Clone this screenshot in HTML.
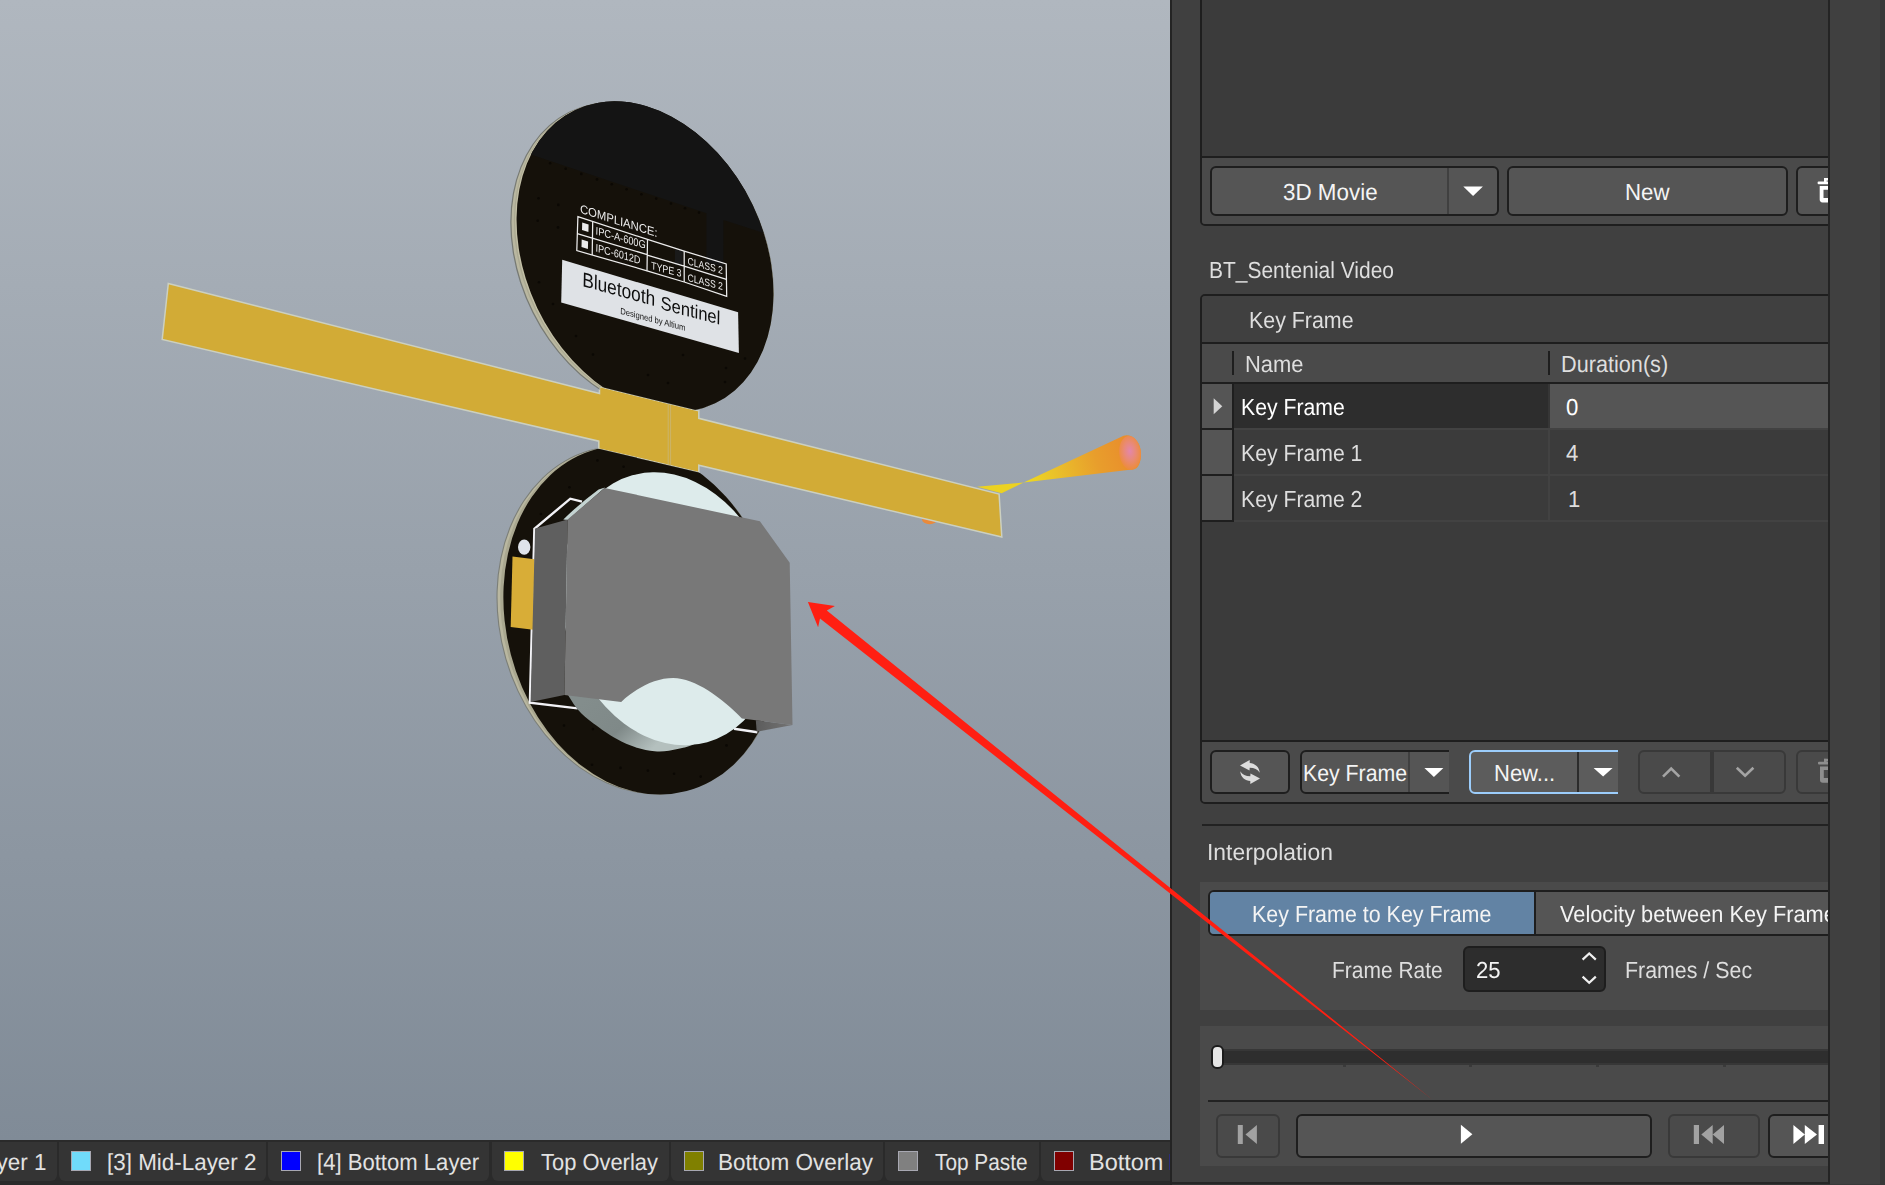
<!DOCTYPE html>
<html lang="en">
<head>
<meta charset="utf-8">
<title>3D Movie Editor</title>
<style>
html,body{margin:0;padding:0}
body{width:1885px;height:1185px;overflow:hidden;position:relative;background:#404040;font-family:"Liberation Sans",sans-serif}
div,span,svg{box-sizing:border-box}
.a{position:absolute}
.t{position:absolute;white-space:pre;font:23.3px/26px "Liberation Sans",sans-serif;text-rendering:geometricPrecision;transform-origin:0 0}
.btn{position:absolute;background:#555555;border:2px solid #1e1e1e;border-radius:6px}
.dis{background:#4a4a4a;border-color:#393939}
.ln{position:absolute;background:#1e1e1e}
</style>
</head>
<body>
<!-- ===== 3D viewport ===== -->
<div class="a" style="left:0;top:0;width:1170px;height:1140px;background:linear-gradient(180deg,#b0b7bf 0%,#808b97 100%)"></div>
<svg class="a" style="left:0;top:0;will-change:transform" width="1170" height="1140" viewBox="0 0 1170 1140" font-family="'Liberation Sans',sans-serif">
 <defs>
  <linearGradient id="gcone" gradientUnits="userSpaceOnUse" x1="1023" y1="483" x2="1128" y2="452">
   <stop offset="0" stop-color="#eedb1e"/><stop offset="0.3" stop-color="#eac22a"/><stop offset="0.7" stop-color="#e89e2c"/><stop offset="1" stop-color="#e98e2c"/>
  </linearGradient>
  <radialGradient id="gcap" cx="0.5" cy="0.45" r="0.6">
   <stop offset="0" stop-color="#e386ac"/><stop offset="0.45" stop-color="#e98a76"/><stop offset="1" stop-color="#ee8c2e"/>
  </radialGradient>
  <linearGradient id="gbat" gradientUnits="userSpaceOnUse" x1="585" y1="700" x2="640" y2="760">
   <stop offset="0" stop-color="#838d8c"/><stop offset="0.55" stop-color="#7f8988"/><stop offset="1" stop-color="#b4c0be"/>
  </linearGradient>
  <linearGradient id="gfacet" gradientUnits="userSpaceOnUse" x1="756" y1="726" x2="792" y2="726">
   <stop offset="0" stop-color="#5c5c5c"/><stop offset="1" stop-color="#747474"/>
  </linearGradient>
  <clipPath id="cliptop"><path d="M0 0H1170V525.6L599.5 386.5V393.6L0 240.4Z"/></clipPath>
  <clipPath id="clipbot"><path d="M0 308.2L1170 583.1V1140H0Z"/></clipPath>
  <clipPath id="cliptopface"><ellipse cx="645.04" cy="256.7" rx="162.45" ry="119.35" transform="rotate(-115.56 645.04 256.7)"/></clipPath>
 </defs>

 <!-- light cone + marker -->
 <path d="M1023.7 482.4L1123.6 435.8C1131 433 1140.6 441 1141 452.8C1141.3 463 1137.5 470.4 1131.9 469.4Z" fill="url(#gcone)"/>
 <path d="M1023.7 482.4L977 486.8L1001.6 493.2Z" fill="#ecd222"/>
 <ellipse cx="1130" cy="452.9" rx="10.8" ry="17" transform="rotate(-6 1130 452.9)" fill="url(#gcap)"/>
 <ellipse cx="929.6" cy="519.6" rx="7.6" ry="4.6" fill="#ea8a3a"/>

 <!-- flex strip -->
 <path d="M168.3 283.4L599.5 393.5V386.5L698.8 410.7V418.3L999.1 494L1001.8 537L698.8 465.3V472.4L598.8 448.9V441.2L162.2 339.5Z" fill="#d2ab36" stroke="#ccd0c0" stroke-width="1.5" stroke-linejoin="miter"/>
 <path d="M668.2 404V466M670.6 404.5V466.5" stroke="#c9b981" stroke-width="0.7" fill="none"/>

 <!-- top board -->
 <g clip-path="url(#cliptop)">
  <ellipse cx="642" cy="257.5" rx="162.9" ry="122.7" transform="rotate(-116.6 642 257.5)" fill="#777a74"/>
  <ellipse cx="642.3" cy="257.5" rx="162.1" ry="121.7" transform="rotate(-116.6 642.3 257.5)" fill="#b9b7a0"/>
  <ellipse cx="643.6" cy="257.1" rx="162.3" ry="120.6" transform="rotate(-116.1 643.6 257.1)" fill="#aba992"/>
  <ellipse cx="644.3" cy="256.9" rx="162.4" ry="120" transform="rotate(-115.8 644.3 256.9)" fill="#c2bfa6"/>
  <ellipse cx="645.04" cy="256.7" rx="162.45" ry="119.35" transform="rotate(-115.56 645.04 256.7)" fill="#15110a"/>
  <g clip-path="url(#cliptopface)">
   <path d="M480 137.5L706.5 213.3V262L723.4 267V220L800 244.5V60H480Z" fill="#141414"/>
   <path d="M675 249.5h7.6v15h-7.6z" fill="#1a1a1a"/>
  </g>
 </g>
 <g fill="#0b0804"><circle cx="550.1" cy="163.2" r="1.3"/><circle cx="565.7" cy="168.7" r="1.3"/><circle cx="581.3" cy="173.9" r="1.3"/><circle cx="597" cy="179.4" r="1.3"/><circle cx="611.8" cy="184.3" r="1.3"/><circle cx="626.6" cy="189.2" r="1.3"/><circle cx="641.4" cy="194.2" r="1.3"/><circle cx="656.2" cy="198.6" r="1.3"/><circle cx="671" cy="203.5" r="1.3"/><circle cx="685" cy="208.2" r="1.3"/><circle cx="699" cy="212.6" r="1.3"/><circle cx="538.5" cy="198.3" r="1.3"/><circle cx="558.3" cy="204.9" r="1.3"/><circle cx="537.7" cy="220.8" r="1.3"/><circle cx="558" cy="227.4" r="1.3"/><circle cx="539" cy="282.3" r="1.3"/><circle cx="553" cy="304" r="1.3"/><circle cx="576" cy="336" r="1.3"/><circle cx="593" cy="354.5" r="1.3"/><circle cx="648" cy="375" r="1.3"/><circle cx="668" cy="383" r="1.3"/><circle cx="683" cy="355" r="1.3"/><circle cx="726" cy="368" r="1.3"/><circle cx="745" cy="358.5" r="1.3"/><circle cx="725" cy="382" r="1.3"/></g>
 <!-- silkscreen on top board -->
 <g fill="#ebebeb">
  <text transform="matrix(1 0.315 -0.03 1 580 212.8)" font-size="12.2" textLength="77.4" lengthAdjust="spacingAndGlyphs">COMPLIANCE:</text>
  <text transform="matrix(1 0.289 -0.03 1 595.6 234.3)" font-size="11" textLength="50" lengthAdjust="spacingAndGlyphs">IPC-A-600G</text>
  <text transform="matrix(1 0.288 -0.03 1 595.6 251.2)" font-size="11" textLength="44.6" lengthAdjust="spacingAndGlyphs">IPC-6012D</text>
  <text transform="matrix(1 0.262 -0.02 1 651 269)" font-size="10.6" textLength="30.4" lengthAdjust="spacingAndGlyphs">TYPE 3</text>
  <text transform="matrix(1 0.266 -0.02 1 687.6 264.6)" font-size="10.4" textLength="35.2" lengthAdjust="spacingAndGlyphs">CLASS 2</text>
  <text transform="matrix(1 0.262 -0.02 1 687.6 280.9)" font-size="10.4" textLength="35.2" lengthAdjust="spacingAndGlyphs">CLASS 2</text>
  <path d="M582.2 222.6l6.4 2-.2 7.4-6.4-2zM581.7 239.6l6.4 2-.2 7.4-6.4-2z"/>
 </g>
 <g fill="none" stroke="#ececec" stroke-width="1.25" stroke-linejoin="miter">
  <path d="M577.9 216.6L647.5 239.4L684.2 251.1L726.2 263.9L726.7 296.3L684.2 282L647 270.8L576.8 250.6Z"/>
  <path d="M592.7 221.6L592.2 255M647.5 239.4L647 270.8M684.2 251.1V282M577.3 233.6L647.2 254.6M647.2 255.2L684.2 266.2L726.4 279.4"/>
 </g>
 <path d="M562.2 259.8L738.1 312.2L738.9 352.9L561.2 302.6Z" fill="#dfe2e6"/>
 <text transform="matrix(1 0.278 -0.02 1 582.2 285.9)" font-size="20.3" fill="#0d0d0d" textLength="72.8" lengthAdjust="spacingAndGlyphs">Bluetooth</text>
 <text transform="matrix(1 0.262 -0.02 1 660.6 309.1)" font-size="18.9" fill="#0d0d0d" textLength="59.6" lengthAdjust="spacingAndGlyphs">Sentinel</text>
 <text transform="matrix(1 0.262 -0.02 1 620.3 313.8)" font-size="8.9" fill="#161616" textLength="65" lengthAdjust="spacingAndGlyphs">Designed by Altium</text>

 <!-- bottom board -->
 <g clip-path="url(#clipbot)">
  <ellipse cx="639.1" cy="620.1" rx="177.1" ry="139.3" transform="rotate(-106.3 639.1 620.1)" fill="#7c7f78"/>
  <ellipse cx="639.3" cy="620.1" rx="176.2" ry="138.4" transform="rotate(-106.3 639.3 620.1)" fill="#b9b7a0"/>
  <ellipse cx="640.4" cy="620.1" rx="176.6" ry="137" transform="rotate(-105.5 640.4 620.1)" fill="#a9a790"/>
  <ellipse cx="641.8" cy="620.1" rx="176.8" ry="135.4" transform="rotate(-104.7 641.8 620.1)" fill="#15110a"/>
 </g>
 <g fill="#0b0804"><circle cx="564" cy="725.5" r="1.3"/><circle cx="592.9" cy="729.1" r="1.3"/><circle cx="592" cy="764.7" r="1.3"/><circle cx="620.5" cy="767.9" r="1.3"/><circle cx="647.9" cy="770.6" r="1.3"/><circle cx="674.1" cy="773.7" r="1.3"/><circle cx="700.7" cy="776.6" r="1.3"/><circle cx="726.5" cy="745.4" r="1.3"/><circle cx="597.4" cy="460.4" r="1.3"/><circle cx="623.6" cy="466.7" r="1.3"/><circle cx="649.7" cy="472.5" r="1.3"/><circle cx="569.4" cy="487.3" r="1.3"/><circle cx="540.9" cy="514" r="1.3"/></g>
 <path d="M582 501.6L570.3 498.7L534.4 528.8L529.9 702.6L577.6 708.4M734 728.7L757.4 732.3" fill="none" stroke="#f2f2f6" stroke-width="2.4" stroke-linejoin="miter"/>
 <path d="M512.5 556.5L534.4 559.3L533.2 629.7L510.7 626.9Z" fill="#d8ad37"/>
 <ellipse cx="524.2" cy="547.1" rx="6.2" ry="7.6" fill="#dfe3ea"/>
 <!-- battery (side then face) -->
 <path d="M568.2 695.3C569.9 697.8 574.0 705.4 578.2 710.1C582.4 714.8 587.1 718.7 593.5 723.5C599.9 728.3 609.4 734.8 616.4 738.8C623.4 742.8 629.1 745.2 635.5 747.3C641.9 749.4 649.0 750.6 654.6 751.2C660.2 751.8 664.1 751.3 668.9 750.7C673.7 750.1 679.0 748.8 683.2 747.8C687.4 746.8 692.2 745.0 694.0 744.5L640 715L621.2 701L564.4 694Z" fill="url(#gbat)"/>
 <ellipse cx="669.7" cy="608.8" rx="138.6" ry="106.2" transform="rotate(-105.7 669.7 608.8)" fill="#ddebeb"/>
 <path d="M568 520L563.3 519.6Q580 503 598.6 489.4L605 487.6Z" fill="#c4d4d2"/>
 <!-- battery holder body -->
 <path d="M535.1 528.5L567.6 519.5L564.4 695L530.6 702Z" fill="#5f5f5f"/>
 <path d="M755.8 720.3L792.5 725L756.7 731.7Z" fill="url(#gfacet)"/>
 <path d="M604.6 487.9L759.9 521.3L789.7 562.8L792.5 725L755.8 720.3L741.9 718.4C722 698 695 678 673.2 678C655 678 636 688 621.2 702L564.4 695L567.6 519.5Z" fill="#787878"/>
</svg>
<!-- ===== layer tabs ===== -->
<div class="a" id="tabs" style="left:0;top:1140px;width:1170px;height:45px;background:#2a2a2a;overflow:hidden">
 <div class="a" style="left:-59.0px;top:1.5px;width:115.6px;height:39.5px;background:#343434;border-radius:0 0 6px 6px"></div>
 <div class="a" style="left:58.6px;top:1.5px;width:207.8px;height:39.5px;background:#343434;border-radius:0 0 6px 6px"></div>
 <div class="a" style="left:268.4px;top:1.5px;width:221.1px;height:39.5px;background:#343434;border-radius:0 0 6px 6px"></div>
 <div class="a" style="left:491.5px;top:1.5px;width:177.3px;height:39.5px;background:#343434;border-radius:0 0 6px 6px"></div>
 <div class="a" style="left:670.8px;top:1.5px;width:212.2px;height:39.5px;background:#343434;border-radius:0 0 6px 6px"></div>
 <div class="a" style="left:885.0px;top:1.5px;width:154.4px;height:39.5px;background:#343434;border-radius:0 0 6px 6px"></div>
 <div class="a" style="left:1041.4px;top:1.5px;width:187.6px;height:39.5px;background:#343434;border-radius:0 0 6px 6px"></div>
 <div class="a" style="left:71.0px;top:11px;width:20px;height:20px;background:#70dbfa;border:1px solid #a8a8b2"></div>
 <div class="a" style="left:281.0px;top:11px;width:20px;height:20px;background:#0000ff;border:1px solid #a8a8b2"></div>
 <div class="a" style="left:504.0px;top:11px;width:20px;height:20px;background:#ffff00;border:1px solid #a8a8b2"></div>
 <div class="a" style="left:683.7px;top:11px;width:20px;height:20px;background:#808000;border:1px solid #a8a8b2"></div>
 <div class="a" style="left:897.8px;top:11px;width:20px;height:20px;background:#808080;border:1px solid #a8a8b2"></div>
 <div class="a" style="left:1053.7px;top:11px;width:20px;height:20px;background:#800000;border:1px solid #a8a8b2"></div>
 <div class="a" style="left:1168.8px;top:14px;width:1.2px;height:16px;background:#2c2c78"></div>
</div>
<span id="t21" class="t" style="left:-102.84px;top:1149px;transform:scaleX(0.9616);color:#e2e2e2">[2] Mid-Layer 1</span><span id="t22" class="t" style="left:106.96px;top:1149px;transform:scaleX(0.9618);color:#e2e2e2">[3] Mid-Layer 2</span><span id="t23" class="t" style="left:317.38px;top:1149px;transform:scaleX(0.9483);color:#e2e2e2">[4] Bottom Layer</span><span id="t24" class="t" style="left:541.05px;top:1149px;transform:scaleX(0.9403);color:#e2e2e2">Top Overlay</span><span id="t25" class="t" style="left:718.27px;top:1149px;transform:scaleX(0.9655);color:#e2e2e2">Bottom Overlay</span><span id="t26" class="t" style="left:934.77px;top:1149px;transform:scaleX(0.8937);color:#e2e2e2">Top Paste</span>
<div class="a" style="left:0;top:1140px;width:1170px;height:45px;overflow:hidden"><div class="a" style="left:0;top:-1140px"><span id="t27" class="t" style="left:1088.69px;top:1149px;transform:scaleX(1.0080);color:#e2e2e2">Bottom Solder</span></div></div>
<!-- ===== right side panel frame ===== -->
<div class="a" style="left:1170px;top:0;width:2px;height:1185px;background:#242424"></div>
<div class="a" style="left:1172px;top:1182px;width:658px;height:2px;background:#262626"></div>
<div class="a" style="left:1172px;top:1184px;width:658px;height:1px;background:#333333"></div>
<div class="a" style="left:1830px;top:1183.5px;width:55px;height:1.5px;background:#393939"></div>
<div class="a" style="left:1828px;top:0;width:2px;height:1184px;background:#242424"></div>
<div class="a" style="left:1880px;top:0;width:5px;height:1185px;background:#383838"></div>

<!-- ===== clipped panel content (page coordinates) ===== -->
<div class="a" id="pc" style="left:0;top:0;width:1828px;height:1182px;overflow:hidden">

 <!-- movie list box -->
 <div class="a" style="left:1200px;top:-6px;width:700px;height:232px;background:#3b3b3b;border:2px solid #1e1e1e;border-radius:5px"></div>
 <div class="a" style="left:1202px;top:158px;width:640px;height:66px;background:#4a4a4a;border-radius:0 0 0 3px"></div>
 <div class="ln" style="left:1202px;top:156px;width:640px;height:2px"></div>
 <!-- 3D Movie split button -->
 <div class="btn" style="left:1210px;top:166px;width:289px;height:50px"></div>
 <div class="a" style="left:1447px;top:168px;width:2px;height:46px;background:#404040"></div>
 <svg class="a" style="left:1460px;top:183px" width="28" height="16" viewBox="1460 183 28 16"><path d="M1463.3 186.6h19.6l-9.8 9.4z" fill="#ffffff"/></svg>
 <span id="t1" class="t" style="left:1282.75px;top:179px;transform:scaleX(0.9612);color:#f4f4f4">3D Movie</span>
 <!-- New button -->
 <div class="btn" style="left:1507px;top:166px;width:281px;height:50px"></div>
 <span id="t2" class="t" style="left:1625.48px;top:179px;transform:scaleX(0.9558);color:#f4f4f4">New</span>
 <!-- delete button (clipped) -->
 <div class="btn" style="left:1796px;top:166px;width:60px;height:50px"></div>
 <svg class="a" style="left:1814px;top:175px" width="30" height="30" viewBox="1814 175 30 30"><g fill="#ffffff"><rect x="1824" y="178" width="8" height="2.6"/><rect x="1824" y="178" width="2.6" height="5"/><rect x="1817.6" y="181.6" width="20" height="2.7" rx="1"/><path d="M1819.7 186h17v13.6a2.8 2.8 0 0 1-2.8 2.8h-11.4a2.8 2.8 0 0 1-2.8-2.8zM1823.5 189.7v8.4h7v-8.4z" fill-rule="evenodd"/></g></svg>

 <span id="t3" class="t" style="left:1209.28px;top:257px;transform:scaleX(0.9003);color:#dedede">BT_Sentenial Video</span>

 <!-- key frame box -->
 <div class="a" style="left:1200px;top:294px;width:700px;height:510px;background:#3b3b3b;border:2px solid #1e1e1e;border-radius:5px"></div>
 <div class="a" style="left:1202px;top:296px;width:640px;height:46px;background:#404040;border-radius:3px 0 0 0"></div>
 <span id="t4" class="t" style="left:1248.85px;top:307px;transform:scaleX(0.9177);color:#dedede">Key Frame</span>
 <div class="ln" style="left:1202px;top:342px;width:640px;height:2px"></div>
 <div class="a" style="left:1202px;top:344px;width:640px;height:38px;background:#4a4a4a"></div>
 <div class="ln" style="left:1232px;top:351px;width:2px;height:24px"></div>
 <div class="ln" style="left:1548px;top:351px;width:2px;height:24px"></div>
 <span id="t5" class="t" style="left:1245.31px;top:351px;transform:scaleX(0.9423);color:#dedede">Name</span><span id="t6" class="t" style="left:1561.23px;top:351px;transform:scaleX(0.9298);color:#dedede">Duration(s)</span>
 <div class="ln" style="left:1202px;top:382px;width:640px;height:2px"></div>
 <!-- rows -->
 <div class="a" style="left:1202px;top:384px;width:30px;height:138px;background:#555555"></div>
 <div class="ln" style="left:1232px;top:384px;width:2px;height:138px"></div>
 <div class="ln" style="left:1202px;top:428px;width:32px;height:2px"></div>
 <div class="ln" style="left:1202px;top:474px;width:32px;height:2px"></div>
 <div class="ln" style="left:1202px;top:520px;width:32px;height:2px"></div>
 <div class="a" style="left:1234px;top:384px;width:314px;height:44px;background:#2d2d2d"></div>
 <div class="a" style="left:1548px;top:384px;width:2px;height:44px;background:#363636"></div>
 <div class="a" style="left:1550px;top:384px;width:300px;height:44px;background:#555555"></div>
 <div class="a" style="left:1234px;top:428px;width:620px;height:2px;background:#424242"></div>
 <div class="a" style="left:1234px;top:474px;width:620px;height:2px;background:#424242"></div>
 <div class="a" style="left:1234px;top:520px;width:620px;height:2px;background:#424242"></div>
 <div class="a" style="left:1548px;top:430px;width:2px;height:90px;background:#424242"></div>
 <svg class="a" style="left:1210px;top:396px" width="16" height="20" viewBox="1210 396 16 20"><path d="M1213.7 398.3l8.6 8-8.6 8z" fill="#d4d4d4"/></svg>
 <span id="t7" class="t" style="left:1241.46px;top:394px;transform:scaleX(0.9105);color:#ffffff">Key Frame</span><span id="t8" class="t" style="left:1241.46px;top:440px;transform:scaleX(0.9105);color:#dedede">Key Frame 1</span><span id="t9" class="t" style="left:1241.46px;top:486px;transform:scaleX(0.9105);color:#dedede">Key Frame 2</span><span id="t10" class="t" style="left:1566.00px;top:394px;transform:scaleX(0.9500);color:#ffffff">0</span><span id="t11" class="t" style="left:1565.55px;top:440px;transform:scaleX(0.9500);color:#dedede">4</span><span id="t12" class="t" style="left:1567.50px;top:486px;transform:scaleX(0.9500);color:#dedede">1</span>

 <!-- key frame toolbar -->
 <div class="ln" style="left:1202px;top:740px;width:640px;height:2px"></div>
 <div class="a" style="left:1202px;top:742px;width:640px;height:60px;background:#4a4a4a;border-radius:0 0 0 3px"></div>
 <div class="btn" style="left:1210px;top:750px;width:80px;height:44px"></div>
 <svg class="a" style="left:1236px;top:756px" width="28" height="32" viewBox="1236 756 28 32"><g fill="#dcdcdc"><path id="rf" d="M1240 765.4L1249.7 759.9V762.9C1254.5 763.3 1259.4 766.5 1259.7 772.8C1257.8 769.4 1254.3 767.9 1249.7 767.8L1249.5 770.6Z"/><path d="M1260 778.6L1250.3 784.1V781.1C1245.5 780.7 1240.6 777.5 1240.3 771.2C1242.2 774.6 1245.7 776.1 1250.3 776.2L1250.5 773.4Z"/></g></svg>
 <!-- Key Frame combo (right side clipped) -->
 <div class="a" style="left:1300px;top:750px;width:149px;height:44px;overflow:hidden"><div class="btn" style="left:0;top:0;width:170px;height:44px"></div></div>
 <div class="a" style="left:1408px;top:752px;width:2px;height:40px;background:#404040"></div>
 <svg class="a" style="left:1420px;top:764px" width="28" height="16" viewBox="1420 764 28 16"><path d="M1424.4 767.9h19l-9.5 9z" fill="#ffffff"/></svg>
 <span id="t13" class="t" style="left:1303.26px;top:760px;transform:scaleX(0.9141);color:#f4f4f4">Key Frame</span>
 <!-- New... combo (focused, right side clipped) -->
 <div class="a" style="left:1469px;top:750px;width:149px;height:44px;overflow:hidden"><div class="btn" style="left:0;top:0;width:170px;height:44px;background:#5c5c5c;border-color:#9ccdfb"></div></div>
 <div class="a" style="left:1577px;top:752px;width:2px;height:40px;background:#2b2b2b"></div>
 <svg class="a" style="left:1590px;top:764px" width="28" height="16" viewBox="1590 764 28 16"><path d="M1593.6 767.9h19l-9.5 8.6z" fill="#ffffff"/></svg>
 <span id="t14" class="t" style="left:1494.10px;top:760px;transform:scaleX(0.9439);color:#f4f4f4">New...</span>
 <!-- up / down -->
 <div class="btn dis" style="left:1638px;top:750px;width:148px;height:44px"></div>
 <div class="a" style="left:1710px;top:752px;width:4px;height:40px;background:#383838"></div>
 <svg class="a" style="left:1655px;top:760px" width="110" height="24" viewBox="1655 760 110 24"><g fill="none" stroke="#a4a4a4" stroke-width="2.6"><path d="M1663 776.6l8.2-8 8.2 8"/><path d="M1736.8 767.8l8.3 8 8.3-8"/></g></svg>
 <!-- delete (disabled, clipped) -->
 <div class="btn dis" style="left:1796px;top:750px;width:60px;height:44px"></div>
 <svg class="a" style="left:1814px;top:755px" width="30" height="30" viewBox="1814 175 30 30"><g fill="#8e8e8e"><rect x="1824" y="178.8" width="8" height="2.6"/><rect x="1824" y="178.8" width="2.6" height="4"/><rect x="1818" y="181.8" width="20" height="2.7" rx="1"/><path d="M1820 186.4h17v13.6a2.8 2.8 0 0 1-2.8 2.8h-11.4a2.8 2.8 0 0 1-2.8-2.8zM1823.8 190v8h7v-8z" fill-rule="evenodd"/></g></svg>

 <!-- separator + Interpolation -->
 <div class="ln" style="left:1202px;top:824px;width:640px;height:2px;background:#222222"></div>
 <span id="t15" class="t" style="left:1206.96px;top:839px;transform:scaleX(0.9816);color:#dedede">Interpolation</span>
 <div class="a" style="left:1200px;top:882px;width:640px;height:128px;background:#4a4a4a"></div>
 <div class="btn" style="left:1208px;top:890px;width:700px;height:46px"></div>
 <div class="a" style="left:1210px;top:892px;width:324px;height:42px;background:#6283a4;border-radius:4px 0 0 4px"></div>
 <div class="ln" style="left:1534px;top:892px;width:2px;height:42px"></div>
 <span id="t16" class="t" style="left:1252.45px;top:901px;transform:scaleX(0.9199);color:#f4f4f4">Key Frame to Key Frame</span><span id="t17" class="t" style="left:1560.10px;top:901px;transform:scaleX(0.9343);color:#f4f4f4">Velocity between Key Frames</span>
 <span id="t18" class="t" style="left:1332.28px;top:957px;transform:scaleX(0.9006);color:#dedede">Frame Rate</span>
 <div class="btn" style="left:1463px;top:946px;width:143px;height:46px;background:#2d2d2d"></div>
 <span id="t19" class="t" style="left:1476.26px;top:957px;transform:scaleX(0.9497);color:#f4f4f4">25</span>
 <svg class="a" style="left:1578px;top:949px" width="24" height="40" viewBox="1578 949 24 40"><g fill="none" stroke="#f0f0f0" stroke-width="2.2"><path d="M1582.6 959.6l6.6-6.2 6.6 6.2"/><path d="M1582.6 976.6l6.6 6.2 6.6-6.2"/></g></svg>
 <span id="t20" class="t" style="left:1624.85px;top:957px;transform:scaleX(0.9173);color:#dedede">Frames / Sec</span>

 <!-- player -->
 <div class="a" style="left:1200px;top:1026px;width:640px;height:140px;background:#4a4a4a"></div>
 <div class="a" style="left:1218px;top:1049px;width:640px;height:16px;background:#2e2e2e;border:2px solid #373737;border-left:0"></div>
 <div class="a" style="left:1343px;top:1065px;width:3px;height:2px;background:#3a3a3a"></div>
 <div class="a" style="left:1469px;top:1065px;width:3px;height:2px;background:#3a3a3a"></div>
 <div class="a" style="left:1596px;top:1065px;width:3px;height:2px;background:#3a3a3a"></div>
 <div class="a" style="left:1723px;top:1065px;width:3px;height:2px;background:#3a3a3a"></div>
 <div class="a" style="left:1211px;top:1045px;width:13px;height:24px;background:#e6e6e6;border:2px solid #1c1c1c;border-radius:6px"></div>
 <div class="ln" style="left:1208px;top:1100px;width:640px;height:2px;background:#222222"></div>
 <div class="btn dis" style="left:1216px;top:1114px;width:64px;height:44px"></div>
 <svg class="a" style="left:1234px;top:1122px" width="28" height="26" viewBox="1234 1122 28 26"><g fill="#a2a2a2"><rect x="1237.8" y="1125" width="5" height="19"/><path d="M1256.9 1125v19l-11.4-9.5z"/></g></svg>
 <div class="btn" style="left:1296px;top:1114px;width:356px;height:44px"></div>
 <svg class="a" style="left:1456px;top:1122px" width="22" height="26" viewBox="1456 1122 22 26"><path d="M1460.9 1124.8v19l11.5-9.5z" fill="#ffffff"/></svg>
 <div class="btn dis" style="left:1668px;top:1114px;width:92px;height:44px"></div>
 <svg class="a" style="left:1690px;top:1122px" width="40" height="26" viewBox="1690 1122 40 26"><g fill="#a2a2a2"><rect x="1693.8" y="1125" width="5.2" height="19"/><path d="M1712.7 1125v19l-11.4-9.5zM1724 1125v19l-11.3-9.5z"/></g></svg>
 <div class="btn" style="left:1768px;top:1114px;width:92px;height:44px"></div>
 <svg class="a" style="left:1790px;top:1122px" width="40" height="26" viewBox="1790 1122 40 26"><g fill="#ffffff"><path d="M1793.4 1125v19l11.4-9.5zM1804.8 1125v19l12.2-9.5z"/><rect x="1818.6" y="1125" width="5.4" height="19"/></g></svg>
</div>
<!-- ===== red annotation arrow (over everything) ===== -->
<svg class="a" style="left:0;top:0;pointer-events:none" width="1885" height="1185" viewBox="0 0 1885 1185">
 <path d="M807.9 602L834.9 606L826.8 610.6L1432.5 1099.7L820 618.4L818.1 627.2Z" fill="#ff1f12"/>
</svg>

</body>
</html>
